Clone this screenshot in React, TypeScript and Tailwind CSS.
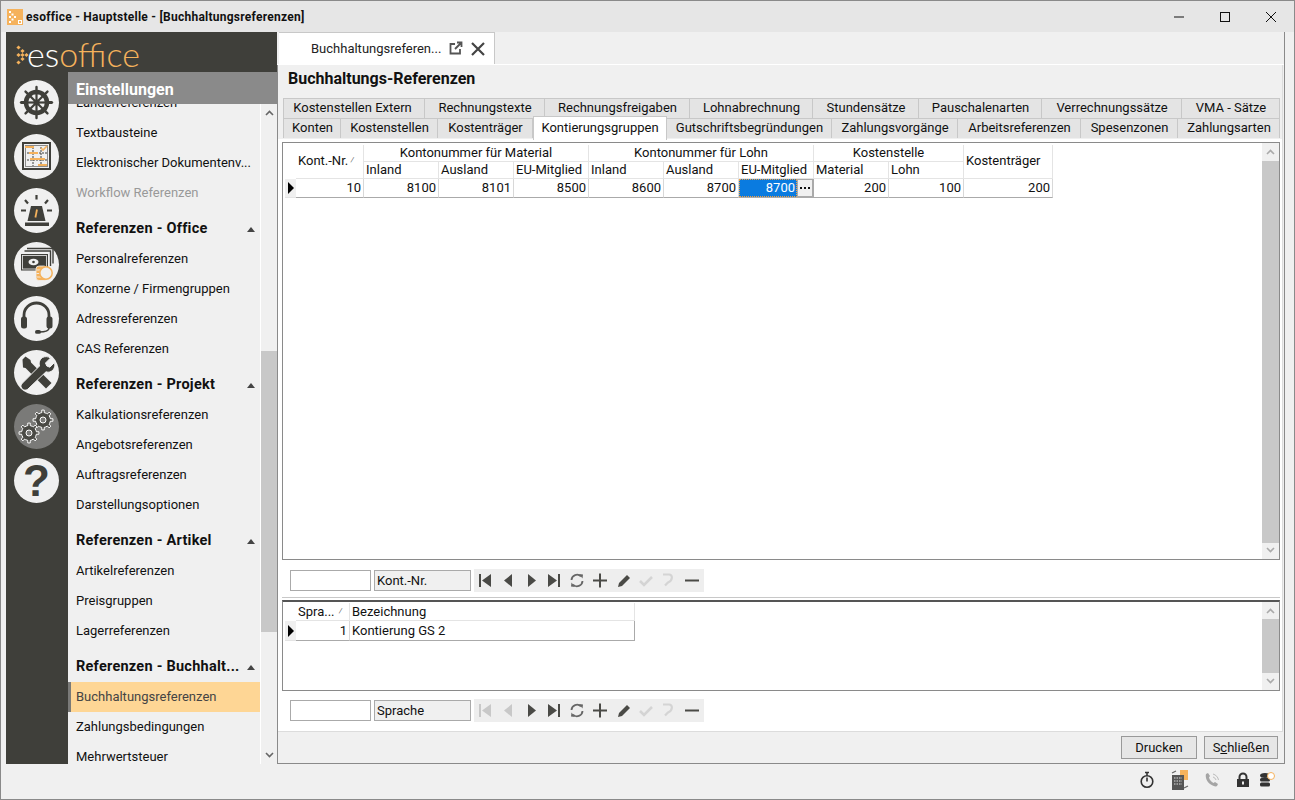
import React from "react";

const G = "#3f3f3a";
const O = "#f5b25c";

function Helm() {
  const spokes = [0, 45, 90, 135, 180, 225, 270, 315];
  return (
    <svg viewBox="0 0 45 45" className="w-[45px] h-[45px]">
      {[0, 45, 90, 135].map((a) => (
        <line key={a} x1="22.5" y1="7" x2="22.5" y2="38" stroke={G} strokeWidth="2.4" strokeLinecap="round" transform={`rotate(${a} 22.5 22.5)`} />
      ))}
      <line x1="7" y1="22.5" x2="38" y2="22.5" stroke={G} strokeWidth="3" />
      <circle cx="22.5" cy="22.5" r="10.5" fill="#f0f0f0" stroke={G} strokeWidth="4.4" />
      {spokes.map((a) => (
        <line key={a} x1="22.5" y1="22.5" x2="22.5" y2="13" stroke={G} strokeWidth="2.2" transform={`rotate(${a} 22.5 22.5)`} />
      ))}
      <circle cx="22.5" cy="22.5" r="3" fill={G} />
    </svg>
  );
}
function Board() {
  return (
    <svg viewBox="0 0 45 45" className="w-[45px] h-[45px]">
      <rect x="9" y="9" width="27" height="26" fill="none" stroke={G} strokeWidth="2" />
      <rect x="11.5" y="11.5" width="22" height="21" fill="none" stroke="#8a8a8a" strokeWidth="1" />
      <path d="M19 13v19M27 13v19M13 19h20M13 26h20" stroke={G} strokeWidth="1" strokeDasharray="2 1" />
      <rect x="11" y="12" width="9" height="2" fill={O} />
      <rect x="15" y="18" width="9" height="2" fill={O} />
      <rect x="16" y="24" width="15" height="2" fill={O} />
      <rect x="24" y="30" width="9" height="2" fill={O} />
      <path d="M27 14l2 2 4-4" fill="none" stroke={O} strokeWidth="1.6" />
    </svg>
  );
}
function Siren() {
  return (
    <svg viewBox="0 0 45 45" className="w-[45px] h-[45px]">
      <path d="M17 18h11l3.500 15h-18z" fill={G} />
      <rect x="11" y="34.500" width="24" height="3.500" fill={G} />
      <path d="M23 21.500l-1.600 8" stroke={O} strokeWidth="1.800" />
      <path d="M22.5 7v4.500M11 12l3 3.500M34 12l-3 3.500M7 22.500h5M33 22.500h5" stroke={G} strokeWidth="2.2" />
    </svg>
  );
}
function Money() {
  return (
    <svg viewBox="0 0 45 45" className="w-[45px] h-[45px]">
      <path d="M13 6.500h26v15M10.500 9h26v15" fill="none" stroke={G} strokeWidth="1.400" />
      <rect x="7" y="12" width="27" height="16.500" fill={G} />
      <rect x="8.500" y="13.500" width="24" height="13.500" fill={G} stroke="#f0f0f0" strokeWidth="0.8" />
      <ellipse cx="19.5" cy="20" rx="5" ry="3.200" fill="#f0f0f0" />
      <circle cx="19.5" cy="20" r="1.300" fill={G} />
      <rect x="22" y="24" width="11" height="14.500" rx="3" fill={O} stroke="#f0f0f0" strokeWidth="0.8" />
      <path d="M22.500 28h9M22.500 31.500h9M22.500 35h9" stroke="#f0f0f0" strokeWidth="0.9" />
      <circle cx="32" cy="31" r="6.200" fill="#f0f0f0" stroke={O} strokeWidth="1.500" />
    </svg>
  );
}
function Headset() {
  return (
    <svg viewBox="0 0 45 45" className="w-[45px] h-[45px]">
      <path d="M10 24v-5a12.500 12 0 0 1 25 0v5" fill="none" stroke={G} strokeWidth="2.800" />
      <rect x="7" y="20.500" width="6" height="12" rx="2.500" fill={G} />
      <rect x="32.500" y="20.500" width="6" height="12" rx="2.500" fill={G} />
      <path d="M35 32c0 3-4 4-10 4" fill="none" stroke={G} strokeWidth="1.600" />
      <rect x="21" y="34" width="6" height="3.800" rx="1.900" fill={G} />
    </svg>
  );
}
function Tools() {
  return (
    <svg viewBox="0 0 45 45" className="w-[45px] h-[45px]">
      <path d="M8.500 9.500l3-3 5 3.500.5 2.500 20.500 20.500-5.500 5.500-20.500-20.500-2.500-.5z" fill={G} />
      <path d="M36.500 8l-5 5 1.300 3 3 1.200 4.700-4.700c1 4-.5 7.500-3.500 9-1.800.8-3.500.8-5 .3L14 39c-2 2-5.500 1-6.500-1-1-2-.5-3.500 1-5L25.500 16c-.8-3 0-6.500 3-8.500 2.200-1.300 5.500-1.200 8 .5z" fill={G} stroke="#f0f0f0" strokeWidth="1" />
    </svg>
  );
}
function cogPath(n: number, ro: number, ri: number) {
  const pts: string[] = [];
  const step = (Math.PI * 2) / n;
  for (let i = 0; i < n; i++) {
    const a = i * step;
    const w = step * 0.2;
    const pairs: [number, number][] = [
      [a - step / 2 + w * 0.6, ri],
      [a - w, ri],
      [a - w * 0.8, ro],
      [a + w * 0.8, ro],
      [a + w, ri],
    ];
    for (const [t, r] of pairs) pts.push(`${(Math.sin(t) * r).toFixed(2)} ${(-Math.cos(t) * r).toFixed(2)}`);
  }
  return "M" + pts.join("L") + "z";
}
function Gear({ x, y }: { x: number; y: number }) {
  return (
    <g transform={`translate(${x} ${y})`}>
      <path d={cogPath(8, 10, 7.5)} fill="#4a4a45" stroke="#fff" strokeWidth="1" strokeLinejoin="round" />
      <circle r="3" fill="#7a7a78" stroke="#fff" strokeWidth="1" />
    </g>
  );
}
function Gears() {
  return (
    <svg viewBox="0 0 45 45" className="w-[45px] h-[45px]">
      <Gear x={29} y={16} />
      <Gear x={15} y={29} />
    </svg>
  );
}

function Circle({ children, active }: { children: React.ReactNode; active?: boolean }) {
  return (
    <div className={`w-[45px] h-[45px] rounded-full flex items-center justify-center ${active ? "bg-[#7a7a78]" : "bg-[#f0f0f0]"}`}>
      {children}
    </div>
  );
}

function Item({ children, muted, selected }: { children: React.ReactNode; muted?: boolean; selected?: boolean }) {
  return (
    <div
      className={`h-[30px] shrink-0 flex items-center text-[13px] whitespace-nowrap ${
        selected ? "bg-[#fed695] text-[#444] border-l-[3px] border-[#7a7a78] pl-[5px]" : "pl-[8px]"
      } ${muted ? "text-[#999]" : selected ? "" : "text-[#111]"}`}
    >
      {children}
    </div>
  );
}
function Head({ children }: { children: React.ReactNode }) {
  return (
    <div className="h-[36px] shrink-0 pt-[6px] pl-[8px] pr-[5px] flex items-center justify-between text-[14.500px] tracking-[0.25px] font-bold text-[#111] whitespace-nowrap">
      <span>{children}</span>
      <svg viewBox="0 0 8 5" className="w-[8px] h-[5px]"><path d="M0 5L4 0l4 5z" fill="#444" /></svg>
    </div>
  );
}
function Chev({ up, color = "#777" }: { up?: boolean; color?: string }) {
  return (
    <svg viewBox="0 0 9 6" className="w-[9px] h-[6px]">
      <path d={up ? "M1 5l3.500-3.500L8 5" : "M1 1l3.500 3.500L8 1"} fill="none" stroke={color} strokeWidth="1.600" />
    </svg>
  );
}

function Scroll({ thumbTop, thumbH, w = 17, color = "#aaa" }: { thumbTop: number; thumbH: number; w?: number; color?: string }) {
  return (
    <div className="relative h-full bg-[#f0f0f0] shrink-0" style={{ width: w }}>
      <div className="absolute top-[6px] inset-x-0 flex justify-center"><Chev up color={color} /></div>
      <div className="absolute bottom-[6px] inset-x-0 flex justify-center"><Chev color={color} /></div>
      <div className="absolute inset-x-0 bg-[#c8c8c8]" style={{ top: thumbTop, height: thumbH }} />
    </div>
  );
}

function Tab({ w, children, active }: { w: number; children: React.ReactNode; active?: boolean }) {
  return (
    <div
      style={{ width: w }}
      className={
        active
          ? "h-[24px] -mt-[2px] pb-[1px] shrink-0 bg-white border border-[#c8c8c8] border-b-0 flex items-center justify-center text-[13px] text-[#111] relative"
          : "h-[20px] pb-[1px] pl-[1px] shrink-0 bg-[#e4e4e4] border-r border-t border-[#c8c8c8] first:border-l flex items-center justify-center text-[13px] text-[#111]"
      }
    >
      {children}
    </div>
  );
}

function HCell({ children, span, rows, center, tall }: { children: React.ReactNode; span?: string; rows?: string; center?: boolean; tall?: boolean }) {
  return (
    <div className={`${span ?? ""} ${rows ?? ""} ${tall ? "pb-[2px]" : ""} bg-white border-r border-b border-[#e4e4e4] flex items-center text-[13px] text-[#111] px-[2px] ${center ? "justify-center" : ""}`}>
      {children}
    </div>
  );
}
function DCell({ children }: { children: React.ReactNode }) {
  return <div className="border-r border-b border-[#d8d8d8] border-b-[#aaa] flex items-center justify-end pr-[2px] text-[13px] text-[#111]">{children}</div>;
}

function Arrow() {
  return (
    <svg viewBox="0 0 6 12" className="w-[6px] h-[12px] ml-[3px]"><path d="M0 0l6 6-6 6z" fill="#000" /></svg>
  );
}

function Nav({ label, dimFirst }: { label: string; dimFirst?: boolean }) {
  const d = "#4a4a46";
  const f = dimFirst ? "#c8c8c8" : d;
  return (
    <div className="flex items-center h-[23px] pl-[8px]">
      <div className="w-[81px] h-[21px] bg-white border border-[#aaa]" />
      <div className="ml-[3px] w-[97px] h-[21px] bg-[#f0f0f0] border border-[#aaa] flex items-center pl-[2px] text-[13px] text-[#111]">{label}</div>
      <div className="ml-[3px] w-[230px] h-[23px] bg-[#eeeeee]">
        <svg viewBox="0 0 230 23" className="w-[230px] h-[23px]">
          <path d="M5 5h2v13H5zM8 11.500L17 5v13z" fill={f} />
          <path d="M30 11.500L38 5v13z" fill={f} />
          <path d="M54 5l8 6.500L54 18z" fill={d} />
          <path d="M74 5l9 6.500L74 18zM84 5h2v13h-2z" fill={d} />
          <path d="M97.500 11a5.500 5.500 0 0 1 9.500-3.500M108.500 12a5.500 5.500 0 0 1-9.500 3.500" fill="none" stroke="#666" strokeWidth="1.800" />
          <path d="M105 5l4 .5-.5 4zM101 18l-4-.5.500-4z" fill="#666" />
          <path d="M119 11.500h14M126 4.500v14" stroke={d} strokeWidth="2" />
          <path d="M144 18l1-4 8-8 3 3-8 8z" fill={d} />
          <path d="M166 12l4 4 8-8" fill="none" stroke="#d4d4d4" strokeWidth="2.500" />
          <path d="M189 5.500h6c4 0 4 6-1 8l-3 3" fill="none" stroke="#d4d4d4" strokeWidth="2.200" />
          <path d="M211 11.500h14" stroke={d} strokeWidth="2" />
        </svg>
      </div>
    </div>
  );
}

export default function App() {
  const side = { fontFamily: "Roboto, sans-serif" };
  const logoDots = [[2, 2], [6, 5.500], [10, 9.500], [6, 13.500], [2, 17], [2, 9.500], [6, 9.500]];
  return (
    <div className="w-[1295px] h-[800px] border border-[#8a8a8a] bg-[#f0f0f0] flex flex-col overflow-hidden" style={side}>
      {/* title bar */}
      <div className="h-[31px] shrink-0 bg-[#e6e6e6] flex items-center">
        <svg viewBox="0 0 16 16" className="w-[16px] h-[16px] ml-[6px]">
          <rect width="16" height="16" fill="#f5b25c" />
          <path d="M2 2h2v2H2zM4.500 4.500h2v2h-2zM7 7h2v2H7zM4.500 9.500h2v2h-2zM2 12h2v2H2zM2 7h2v2H2z" fill="#fff" />
          <rect x="11.500" y="11.500" width="3" height="3" fill="none" stroke="#fff" />
        </svg>
        <span className="ml-[3px] text-[12px] font-bold text-[#111] tracking-[0.25px]">esoffice - Hauptstelle - [Buchhaltungsreferenzen]</span>
        <div className="ml-auto flex items-center">
          <svg viewBox="0 0 46 16" className="w-[46px] h-[16px]"><path d="M0 8h10" stroke="#111" /></svg>
          <svg viewBox="0 0 46 16" className="w-[46px] h-[16px]"><rect x="0.500" y="3.500" width="9" height="9" fill="none" stroke="#111" /></svg>
          <svg viewBox="0 0 28 16" className="w-[28px] h-[16px]"><path d="M0 3l10 10M10 3L0 13" stroke="#111" /></svg>
        </div>
      </div>
      {/* body */}
      <div className="h-[732px] shrink-0 flex pl-[5px]">
        {/* left */}
        <div className="w-[271px] h-full bg-[#3f3f3a] flex flex-col shrink-0">
          <div className="h-[40px] shrink-0 flex items-start pl-[9px] pt-[12px]">
            <svg viewBox="0 0 14 21" className="w-[14px] h-[21px]">
              {logoDots.map(([x, y], i) => (
                <rect key={i} x={x} y={y} width="3" height="3" fill={O} transform={`rotate(45 ${x + 1.5} ${y + 1.5})`} />
              ))}
            </svg>
            <span className="text-[34px] leading-[34px] font-light -mt-[7px] -ml-[2px]" style={{ fontFamily: "Lato, sans-serif" }}>
              <span className="text-white">es</span>
              <span className="text-[#f5b25c]">office</span>
            </span>
          </div>
          <div className="flex-1 flex min-h-0">
            <div className="w-[62px] shrink-0 pt-[8px] pl-[8px] flex flex-col gap-[9px]">
              <Circle><Helm /></Circle>
              <Circle><Board /></Circle>
              <Circle><Siren /></Circle>
              <Circle><Money /></Circle>
              <Circle><Headset /></Circle>
              <Circle><Tools /></Circle>
              <Circle active><Gears /></Circle>
              <Circle><span className="text-[44px] leading-[45px] font-bold text-[#3f3f3a]" style={{ fontFamily: "'Liberation Sans', sans-serif" }}>?</span></Circle>
            </div>
            <div className="w-[209px] flex flex-col bg-[#f0f0f0] min-h-0">
              <div className="h-[32px] shrink-0 bg-[#8a8a8a] flex items-center pt-[3px] pl-[8px] text-[16px] font-bold text-white">Einstellungen</div>
              <div className="flex-1 flex min-h-0">
                <div className="w-[193px] border-r border-white overflow-hidden">
                  <div className="-mt-[16px] flex flex-col">
                    <Item>Länderreferenzen</Item>
                    <Item>Textbausteine</Item>
                    <Item>Elektronischer Dokumentenv...</Item>
                    <Item muted>Workflow Referenzen</Item>
                    <Head>Referenzen - Office</Head>
                    <Item>Personalreferenzen</Item>
                    <Item>Konzerne / Firmengruppen</Item>
                    <Item>Adressreferenzen</Item>
                    <Item>CAS Referenzen</Item>
                    <Head>Referenzen - Projekt</Head>
                    <Item>Kalkulationsreferenzen</Item>
                    <Item>Angebotsreferenzen</Item>
                    <Item>Auftragsreferenzen</Item>
                    <Item>Darstellungsoptionen</Item>
                    <Head>Referenzen - Artikel</Head>
                    <Item>Artikelreferenzen</Item>
                    <Item>Preisgruppen</Item>
                    <Item>Lagerreferenzen</Item>
                    <Head>Referenzen - Buchhalt...</Head>
                    <Item selected>Buchhaltungsreferenzen</Item>
                    <Item>Zahlungsbedingungen</Item>
                    <Item>Mehrwertsteuer</Item>
                  </div>
                </div>
                <Scroll thumbTop={247} thumbH={281} w={16} color="#666" />
              </div>
            </div>
          </div>
        </div>
        {/* right */}
        <div className="w-[1008px] h-full flex flex-col shrink-0 border-r border-[#8a8a8a] border-b border-l-0">
          <div className="h-[33px] shrink-0 flex items-end pl-[2px] border-b border-white">
            <div className="w-[216px] h-[32px] bg-white border-t border-r border-[#c8c8c8] flex items-center pl-[32px] text-[13px] text-[#222]">
              <span>Buchhaltungsreferen...</span>
              <svg viewBox="0 0 16 16" className="w-[16px] h-[16px] ml-[6px]">
                <path d="M8 3H3.500v9.500H13V8M8 8l6-6M10 1.500h4.500V6" fill="none" stroke="#555" strokeWidth="1.800" />
              </svg>
              <svg viewBox="0 0 16 16" className="w-[16px] h-[16px] ml-[7px]">
                <path d="M2 2l12 12M14 2L2 14" stroke="#444" strokeWidth="2.200" />
              </svg>
            </div>
          </div>
          <div className="flex-1 flex flex-col border-l border-[#8a8a8a] min-h-0">
            <div className="mr-[1px] flex-1 flex flex-col border-r border-[#dcdcdc] border-b bg-white min-h-0">
              <div className="bg-[#f0f0f0] h-[74px] shrink-0">
                <div className="h-[33px] pl-[10px] pb-[6px] flex items-center text-[16px] font-bold text-[#111]">Buchhaltungs-Referenzen</div>
                <div className="pl-[5px] flex">
                  <Tab w={142}><span className="-ml-[4px]">Kostenstellen Extern</span></Tab>
                  <Tab w={120}>Rechnungstexte</Tab>
                  <Tab w={145}>Rechnungsfreigaben</Tab>
                  <Tab w={123}>Lohnabrechnung</Tab>
                  <Tab w={106}>Stundensätze</Tab>
                  <Tab w={123}>Pauschalenarten</Tab>
                  <Tab w={140}>Verrechnungssätze</Tab>
                  <Tab w={98}>VMA - Sätze</Tab>
                </div>
                <div className="pl-[5px] flex">
                  <Tab w={58}>Konten</Tab>
                  <Tab w={97}>Kostenstellen</Tab>
                  <Tab w={95}>Kostenträger</Tab>
                  <Tab w={134} active>Kontierungsgruppen</Tab>
                  <Tab w={165}>Gutschriftsbegründungen</Tab>
                  <Tab w={126}>Zahlungsvorgänge</Tab>
                  <Tab w={123}>Arbeitsreferenzen</Tab>
                  <Tab w={97}>Spesenzonen</Tab>
                  <Tab w={102}>Zahlungsarten</Tab>
                </div>
              </div>
              <div className="pl-[4px] pt-[3px] flex-1 flex flex-col">
                {/* grid 1 */}
                <div className="w-[998px] h-[418px] border border-[#8a8a8a] flex">
                  <div className="flex-1 pt-[2px] pl-[2px]">
                    <div className="flex">
                      <div className="w-[11px] mt-[34px] h-[19px] flex items-center bg-[#f0f0f0] border-b border-[#e4e4e4]"><Arrow /></div>
                      <div className="grid grid-cols-[68px_75px_75px_75px_75px_75px_75px_75px_75px_89px] grid-rows-[17px_17px_19px] w-[757px]">
                        <HCell rows="row-span-2" tall>Kont.-Nr.<span className="ml-[2px] text-[9px] text-[#555]">⁄</span></HCell>
                        <HCell span="col-span-3" center>Kontonummer für Material</HCell>
                        <HCell span="col-span-3" center>Kontonummer für Lohn</HCell>
                        <HCell span="col-span-2" center>Kostenstelle</HCell>
                        <HCell rows="row-span-2" tall>Kostenträger</HCell>
                        <HCell>Inland</HCell>
                        <HCell>Ausland</HCell>
                        <HCell>EU-Mitglied</HCell>
                        <HCell>Inland</HCell>
                        <HCell>Ausland</HCell>
                        <HCell>EU-Mitglied</HCell>
                        <HCell>Material</HCell>
                        <HCell>Lohn</HCell>
                        <DCell>10</DCell>
                        <DCell>8100</DCell>
                        <DCell>8101</DCell>
                        <DCell>8500</DCell>
                        <DCell>8600</DCell>
                        <DCell>8700</DCell>
                        <div className="border-r border-b border-[#aaa] flex">
                          <div className="w-[58px] bg-[#0a7be0] outline-1 -outline-offset-1 outline-dotted outline-[#f5a040] flex items-center justify-end pr-[2px] text-[13px] text-white">8700</div>
                          <div className="flex-1 bg-[#f0f0f0] border border-[#aaa] flex items-center justify-center">
                            <svg viewBox="0 0 10 2" className="w-[10px] h-[2px]"><path d="M0 0h2v2H0zM4 0h2v2H4zM8 0h2v2H8z" fill="#111" /></svg>
                          </div>
                        </div>
                        <DCell>200</DCell>
                        <DCell>100</DCell>
                        <DCell>200</DCell>
                      </div>
                    </div>
                  </div>
                  <Scroll thumbTop={18} thumbH={382} w={17} />
                </div>
                <div className="mt-[9px]"><Nav label="Kont.-Nr." /></div>
                {/* grid 2 */}
                <div className="mt-[5px] w-[998px] h-[94px] border-t border-[#c8c8c8] pt-[2px]">
                  <div className="h-[91px] border border-[#8a8a8a] border-t-2 border-t-[#555] flex">
                    <div className="flex-1 pl-[2px] pt-[1px]">
                      <div className="flex">
                        <div className="w-[11px] mt-[18px] h-[20px] flex items-center bg-[#f0f0f0] border-b border-[#e4e4e4]"><Arrow /></div>
                        <div className="grid grid-cols-[54px_285px] grid-rows-[18px_20px] w-[339px]">
                          <HCell>Spra...<span className="ml-[4px] text-[9px] text-[#555]">⁄</span></HCell>
                          <HCell>Bezeichnung</HCell>
                          <DCell>1</DCell>
                          <div className="border-r border-b border-[#aaa] flex items-center pl-[2px] text-[13px] text-[#111]">Kontierung GS 2</div>
                        </div>
                      </div>
                    </div>
                    <Scroll thumbTop={17} thumbH={54} w={17} />
                  </div>
                </div>
                <div className="mt-[8px]"><Nav label="Sprache" dimFirst /></div>
              </div>
            </div>
            <div className="h-[31px] shrink-0 flex items-center justify-end gap-[7px] pr-[6px]">
              <div className="w-[76px] h-[23px] bg-[#e6e6e6] border border-[#999] flex items-center justify-center text-[13px] text-[#111]">Drucken</div>
              <div className="w-[74px] h-[23px] bg-[#e6e6e6] border border-[#999] flex items-center justify-center text-[13px] text-[#111]">S<span className="underline">c</span>hließen</div>
            </div>
          </div>
        </div>
      </div>
      {/* status */}
      <div className="flex-1 flex items-center justify-end pr-[19px] pb-[4px] gap-[12px]">
        <svg viewBox="0 0 16 18" className="w-[16px] h-[18px] mr-[2px]"><circle cx="8" cy="10.500" r="5.800" fill="none" stroke="#333" strokeWidth="1.600" /><path d="M8 10.500V6.500M6 1.500h4M8 1.500v3" stroke="#333" strokeWidth="1.600" /></svg>
        <svg viewBox="0 0 22 22" className="w-[22px] h-[22px]"><rect x="11" y="1" width="8" height="10" fill="#f5b25c" /><rect x="3" y="6" width="12" height="15" fill="#555" /><path d="M5 9h8M5 12h8M5 15h8" stroke="#ddd" strokeDasharray="1.500 1" /><path d="M3 4l4-2M15 19l4-2" stroke="#666" strokeWidth="1.200" fill="none" /></svg>
        <svg viewBox="0 0 18 18" className="w-[18px] h-[18px]"><path d="M3 3c-1 3 1 8 4 10s6 3 7 2l1-2-3-2-1.500 1c-2-1-4-3-4.500-5.500L7 5 5 2z" fill="#a5a5a5" /><path d="M10 3c3 1 5 3 5.500 6M10 6c1.500.5 2.500 1.500 3 3" fill="none" stroke="#bbb" /></svg>
        <svg viewBox="0 0 14 16" className="w-[14px] h-[16px] ml-[3px]"><path d="M3.500 7V5a3.500 3.500 0 0 1 7 0v2" fill="none" stroke="#333" strokeWidth="2" /><rect x="1" y="7" width="12" height="8" fill="#333" /><rect x="6" y="9.500" width="2" height="3" fill="#eee" /></svg>
        <svg viewBox="0 0 16 16" className="w-[16px] h-[16px] -ml-[3px]"><ellipse cx="6" cy="3.500" rx="5" ry="2.500" fill="#333" /><rect x="1" y="6" width="10" height="3.500" rx="1.500" fill="#333" /><rect x="1" y="10.500" width="10" height="4" rx="1.500" fill="#333" /><circle cx="12" cy="4" r="3.500" fill="#fff" stroke="#f5b25c" /></svg>
      </div>
    </div>
  );
}
